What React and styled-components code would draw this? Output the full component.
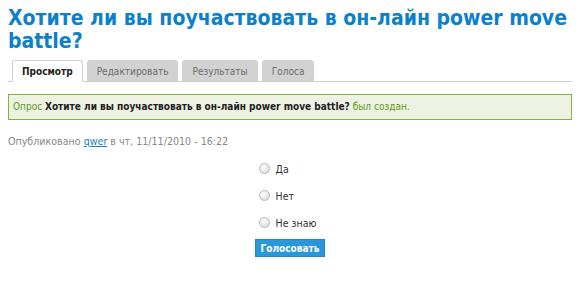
import React from 'react';
import styled, { createGlobalStyle } from 'styled-components';

const GlobalStyle = createGlobalStyle`
  body {
    margin: 0;
    background: #fff;
    font-family: "DejaVu Sans Condensed", "DejaVu Sans", Verdana, sans-serif;
    font-stretch: condensed;
    font-size: 11px;
    color: #333;
  }
`;

const Page = styled.div`
  padding: 7px 8px 0 8px;
`;

const Title = styled.h1`
  margin: 0;
  font-size: 21px;
  line-height: 23px;
  font-weight: bold;
  color: #0b80cc;
`;

const Tabs = styled.ul`
  display: flex;
  gap: 4px;
  list-style: none;
  margin: 7px 0 0 0;
  padding: 0 0 0 4px;
  border-bottom: 1px solid #cfcfcf;
`;

const Tab = styled.li`
  margin-bottom: -1px;
  padding: 0 9px;
  height: 20px;
  line-height: 21px;
  font-size: 10px;
  border: 1px solid #cfcfcf;
  border-bottom-color: ${p => (p.$active ? '#fff' : '#cfcfcf')};
  border-radius: 3px 3px 0 0;
  background: ${p => (p.$active ? '#fff' : '#d2d2d2')};
  color: ${p => (p.$active ? '#222' : '#6b6b6b')};
  font-weight: ${p => (p.$active ? 'bold' : 'normal')};
`;

const Message = styled.div`
  margin-top: 12px;
  padding: 0 4px;
  height: 24px;
  line-height: 24px;
  border: 1px solid #86b23a;
  background: #edf2e2;
  color: #5e9a1c;
  font-size: 10px;
  strong {
    color: #222;
  }
`;

const Meta = styled.div`
  margin-top: 15px;
  font-size: 10.6px;
  color: #888;
  a {
    color: #1681c8;
  }
`;

const PollForm = styled.form`
  display: flex;
  justify-content: center;
  margin-top: 8px;
`;

const Choices = styled.div`
  display: flex;
  flex-direction: column;
  align-items: flex-start;
`;

const Choice = styled.label`
  display: flex;
  align-items: center;
  gap: 6px;
  height: 27px;
  padding-left: 4px;
  font-size: 10.5px;
  color: #333;
`;

const Radio = styled.span`
  width: 11px;
  height: 11px;
  border-radius: 50%;
  border: 1px solid #b9b9b9;
  box-sizing: border-box;
  background: radial-gradient(circle at 40% 35%, #fdfdfd 0%, #e6e6e6 60%, #cfcfcf 100%);
`;

const Button = styled.button`
  margin-top: 3px;
  padding: 0 5px;
  height: 18px;
  border: 1px solid #1f86c6;
  background: #2a97d9;
  color: #fff;
  font-family: inherit;
  font-size: 10px;
  font-weight: bold;
`;

const choices = ['Да', 'Нет', 'Не знаю'];

export default function App() {
  return (
    <Page>
      <GlobalStyle />
      <Title>Хотите ли вы поучаствовать в он-лайн power move battle?</Title>
      <Tabs>
        <Tab $active>Просмотр</Tab>
        <Tab>Редактировать</Tab>
        <Tab>Результаты</Tab>
        <Tab>Голоса</Tab>
      </Tabs>
      <Message>
        Опрос <strong>Хотите ли вы поучаствовать в он-лайн power move battle?</strong> был создан.
      </Message>
      <Meta>
        Опубликовано <a href="#">qwer</a> в чт, 11/11/2010 - 16:22
      </Meta>
      <PollForm>
        <Choices>
          {choices.map(c => (
            <Choice key={c}>
              <Radio />
              {c}
            </Choice>
          ))}
          <Button type="button">Голосовать</Button>
        </Choices>
      </PollForm>
    </Page>
  );
}
